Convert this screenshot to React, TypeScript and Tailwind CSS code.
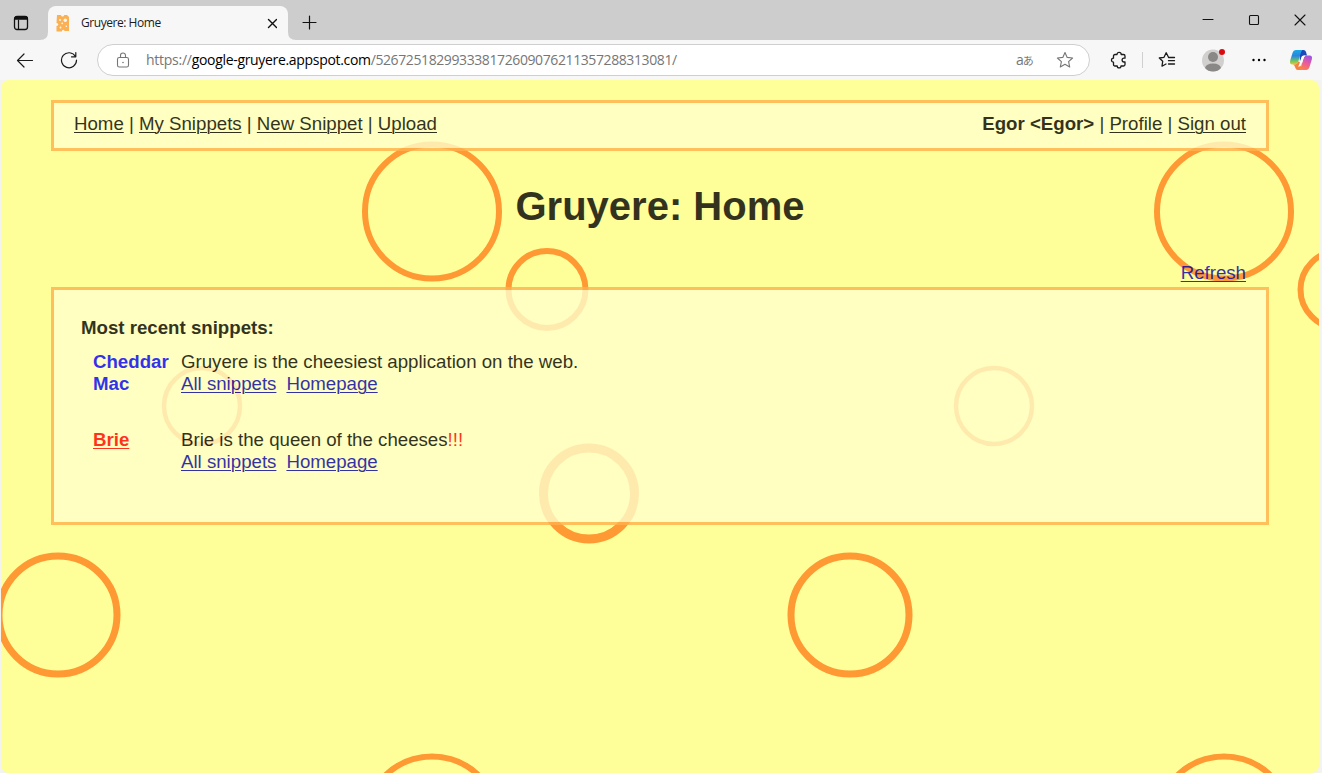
import type { ReactNode } from "react";

type Ring = { x: number; y: number; r: number; w: number };

const rings: Ring[] = [
  { x: 431, y: 131.5, r: 67, w: 6 },
  { x: 1223, y: 131.5, r: 67, w: 6 },
  { x: 546, y: 209.5, r: 38.5, w: 6 },
  { x: 1338, y: 209.5, r: 38.5, w: 6 },
  { x: 201, y: 326, r: 38, w: 4.5 },
  { x: 993, y: 326, r: 38, w: 4.5 },
  { x: 588, y: 413.5, r: 45.5, w: 9 },
  { x: 57, y: 535, r: 59, w: 7 },
  { x: 849, y: 535, r: 59, w: 7 },
  { x: 431, y: 743.5, r: 67, w: 6 },
  { x: 1223, y: 743.5, r: 67, w: 6 },
];

const windowControls = [
  "M3 7.500H13",
  "M4.500 3.500H11.500Q12.500 3.500 12.500 4.500V11.500Q12.500 12.500 11.500 12.500H4.500Q3.500 12.500 3.500 11.500V4.500Q3.500 3.500 4.500 3.500Z",
  "M3 3L13 13M13 3L3 13",
];

function Icon({ size, children, className = "" }: { size: number; children: ReactNode; className?: string }) {
  return (
    <svg
      width={size}
      height={size}
      viewBox={`0 0 ${size} ${size}`}
      fill="none"
      stroke="currentColor"
      strokeLinecap="round"
      strokeLinejoin="round"
      className={`block shrink-0 ${className}`}
    >
      {children}
    </svg>
  );
}

function Cheese() {
  return (
    <svg width="14" height="17" viewBox="0 0 14 17" className="block shrink-0">
      <path d="M1 0H5Q5.200 1.500 6.500 1.500Q8 1.500 8.200 0H11L13 2V16H8.500Q8.200 14.800 7.200 14.800Q6 14.800 5.800 16.500H.5V11Q2.300 10.800 2.300 9.500Q2.300 8.200 .5 8Z" fill="#fbb052" />
      <circle cx="4" cy="5" r="1" fill="#f7f7f7" />
      <circle cx="9.300" cy="5.200" r="1.700" fill="#f7f7f7" />
      <circle cx="6.200" cy="8.300" r=".9" fill="#f7f7f7" />
      <circle cx="10.300" cy="11.300" r=".8" fill="#f7f7f7" />
      <circle cx="4.500" cy="12.500" r=".9" fill="#f7f7f7" />
    </svg>
  );
}

function TabStrip() {
  return (
    <div className="flex h-10 bg-[#cdcdcd] text-[#111]">
      <div className="flex w-12 items-center pt-[5px] pl-[13px]">
        <Icon size={16}>
          <rect x="1.500" y="1.500" width="13" height="13" rx="2.500" strokeWidth="1.300" />
          <path d="M1.500 3.500Q1.500 1.500 3.500 1.500H12.500Q14.500 1.500 14.500 3.500V4.200H1.500Z" fill="currentColor" strokeWidth="1" />
          <path d="M5.500 5V14" strokeWidth="1.200" />
        </Icon>
      </div>
      <div className="relative mt-1.5 flex h-[34px] w-60 items-center rounded-t-lg bg-[#f7f7f7] pl-2">
        <svg width="8" height="8" className="absolute bottom-0 -left-2">
          <path d="M8 0V8H0Q8 8 8 0Z" fill="#f7f7f7" />
        </svg>
        <svg width="8" height="8" className="absolute -right-2 bottom-0">
          <path d="M0 0V8H8Q0 8 0 0Z" fill="#f7f7f7" />
        </svg>
        <Cheese />
        <span className="ml-[11px] w-[180px] text-[12px] tracking-[-0.45px] text-[#1b1b1b]">Gruyere: Home</span>
        <Icon size={16}>
          <path d="M7.500 4.500L15.500 12.500M15.500 4.500L7.500 12.500" strokeWidth="1.400" />
        </Icon>
      </div>
      <div className="flex flex-1 items-center pt-1.5 pl-[14px]">
        <Icon size={15} className="-mt-0.5">
          <path d="M7.500 1V14M1 7.500H14" strokeWidth="1.200" />
        </Icon>
      </div>
      <div className="-mr-px flex">
        {windowControls.map((d) => (
          <div key={d} className="flex w-[46px] justify-center pt-3">
            <Icon size={16}>
              <path d={d} strokeWidth="1.100" />
            </Icon>
          </div>
        ))}
      </div>
    </div>
  );
}

function Copilot() {
  return (
    <svg width="24" height="22" viewBox="0 0 24 22" className="block shrink-0">
      <defs>
        <linearGradient id="cpA" x1="0" y1="0" x2="0" y2="1">
          <stop offset="0" stopColor="#18a8e8" />
          <stop offset=".4" stopColor="#2b83e0" />
          <stop offset=".7" stopColor="#5cbf74" />
          <stop offset="1" stopColor="#e6cc24" />
        </linearGradient>
        <linearGradient id="cpB" x1=".7" y1="0" x2=".3" y2="1">
          <stop offset="0" stopColor="#a052e0" />
          <stop offset=".5" stopColor="#ea5c9c" />
          <stop offset="1" stopColor="#ff8148" />
        </linearGradient>
      </defs>
      <path d="M10 1H14.500Q16.400 1 17 3L18 6.500H15.500Q13.300 6.500 12.600 8.500L11 13Z" fill="#1c48b8" />
      <path d="M7 1H13.500Q12.300 2 11.800 4L9.300 12.500Q8.300 15.500 5.500 15.500H3.500Q.2 15.500 1.200 11.500L3.500 4Q4.400 1 7 1Z" fill="url(#cpA)" />
      <path d="M4 15.500H5.500Q8.300 15.500 9.300 12.500L13 14L11.500 21H9Q6.800 21 6.200 18.500Q5.700 16 4 15.500Z" fill="#f5813e" />
      <path d="M17 21H10Q11.400 20 12 18L14.500 9.500Q15.400 6.500 18 6.500H20.500Q23.800 6.500 22.800 10.500L20.500 18Q19.600 21 17 21Z" fill="url(#cpB)" />
      <path d="M12.700 7.500Q13.500 6.500 15.500 6.500H16.300Q15 7.500 14.500 9.500L12.200 16Q11.500 18 9 17.500Q10 16.500 10.500 14.500Z" fill="#fff" />
    </svg>
  );
}

function Toolbar() {
  return (
    <div className="flex h-10 items-center bg-[#f7f7f7] text-[#1b1b1b]">
      <Icon size={18} className="-mt-px ml-4">
        <path d="M16.500 9.500H1.500M8 3L1.500 9.500L8 16" strokeWidth="1.200" />
      </Icon>
      <Icon size={18} className="ml-[26px]">
        <path d="M15.500 5.500A7.500 7.500 0 1 0 16.500 9M15.800 1.500V5.800H11.500" strokeWidth="1.200" />
      </Icon>
      <div className="ml-[19px] flex h-8 w-[993px] items-center rounded-full border border-[#cfcfcf] bg-white pl-[17px] text-[#767676]">
        <Icon size={16}>
          <rect x="2.500" y="5.500" width="11" height="9.500" rx="1.800" strokeWidth="1.100" />
          <path d="M5.500 5.500V3.500A2.500 2.500 0 0 1 10.500 3.500V5.500" strokeWidth="1.100" />
          <circle cx="8" cy="10.500" r=".8" fill="currentColor" stroke="none" />
        </Icon>
        <div className="ml-[15px] flex w-[870px] text-[14px] leading-5">
          <span className="tracking-[-0.26px]">https://</span>
          <span className="tracking-[-0.32px] text-black">google-gruyere.appspot.com</span>
          <span className="tracking-[-0.4px]">/526725182993338172609076211357288313081/</span>
        </div>
        <span className="flex w-10 items-center text-[14px] leading-5">
          a<span className="-ml-px font-['Noto_Sans_CJK_JP',sans-serif] text-[11px]">あ</span>
        </span>
        <Icon size={18}>
          <path d="M9 1.500L11.200 6.400L16.600 7L12.600 10.600L13.700 16L9 13.300L4.300 16L5.400 10.600L1.400 7L6.800 6.400Z" strokeWidth="1.100" />
        </Icon>
      </div>
      <Icon size={18} className="ml-5">
        <path d="M5 3.500H7A2.100 2.100 0 0 1 11.200 3.500H13.500Q15 3.500 15 5V7.200H14A1.900 1.900 0 0 0 14 11H15V13.500Q15 15 13.500 15H11A1.900 1.900 0 0 1 7.200 15H5Q3.500 15 3.500 13.500V11.200A2 2 0 0 1 3.500 7.200V5Q3.500 3.500 5 3.500Z" strokeWidth="1.300" />
      </Icon>
      <div className="ml-[14px] h-4 w-px bg-[#d0d0d0]" />
      <Icon size={18} className="ml-[15px]">
        <path d="M10.500 6.200L8.200 1.700L6 6.300L1.300 7L4.700 10.300L4 15.200L8 13M10.500 6.500H16.500M10.500 9.700H16.500M10.500 13H16.500" strokeWidth="1.300" />
      </Icon>
      <svg width="24" height="26" viewBox="0 0 24 26" className="ml-[25px] block shrink-0">
        <circle cx="12" cy="13.500" r="11" fill="#d2d0ce" />
        <circle cx="12" cy="10" r="5" fill="#8a8886" />
        <path d="M4 21Q5 16.500 12 16.500Q19 16.500 20 21Q17 24.500 12 24.500Q7 24.500 4 21Z" fill="#8a8886" />
        <circle cx="21" cy="5" r="3" fill="#d90b12" />
      </svg>
      <svg width="16" height="4" viewBox="0 0 16 4" className="ml-[26px] block shrink-0">
        <circle cx="2.500" cy="2" r="1.200" />
        <circle cx="8" cy="2" r="1.200" />
        <circle cx="13.500" cy="2" r="1.200" />
      </svg>
      <div className="ml-[22px]">
        <Copilot />
      </div>
    </div>
  );
}

function Link({ children, className = "" }: { children: ReactNode; className?: string }) {
  return (
    <a href="#" className={`underline decoration-1 underline-offset-2 ${className}`}>
      {children}
    </a>
  );
}

function SnippetLinks() {
  return (
    <div className="flex gap-2.5 text-[#0000aa]">
      <Link>All snippets</Link>
      <Link>Homepage</Link>
    </div>
  );
}

function Page() {
  return (
    <main className="relative mr-[3px] ml-px h-[693px] overflow-hidden rounded-lg bg-[#ffff99] px-[50px] pt-5 font-['Liberation_Sans',Arial,sans-serif] text-[18.670px] leading-[22px] text-black">
      <svg width="1318" height="693" className="absolute top-0 left-0" fill="none" stroke="#ff9933">
        {rings.map((c) => (
          <circle key={`${c.x}-${c.y}`} cx={c.x} cy={c.y} r={c.r} strokeWidth={c.w} />
        ))}
      </svg>
      <nav className="relative flex h-[51px] justify-between border-3 border-[#ffb14e] bg-[#ffffcc] px-5 pt-[10px] opacity-80">
        <div className="whitespace-pre">
          <Link>Home</Link> | <Link>My Snippets</Link> | <Link>New Snippet</Link> | <Link>Upload</Link>
        </div>
        <div className="whitespace-pre">
          <b>Egor &lt;Egor&gt;</b> | <Link>Profile</Link> | <Link>Sign out</Link>
        </div>
      </nav>
      <h1 className="relative mt-8 text-center text-[40px] leading-[46px] font-bold opacity-80">Gruyere: Home</h1>
      <div className="relative mt-[33px] flex h-[25px] justify-end pr-[23px] opacity-80">
        <Link className="text-[#0000aa]">Refresh</Link>
      </div>
      <section className="relative h-[238px] border-3 border-[#ffb14e] bg-[#ffffcc] px-[27px] pt-[27px] opacity-80">
        <h2 className="font-bold">Most recent snippets:</h2>
        <div className="mt-3 grid grid-cols-[88px_1fr] gap-y-[34px] pl-3">
          <b className="text-[#0000ff]">
            Cheddar
            <br />
            Mac
          </b>
          <div>
            <p>Gruyere is the cheesiest application on the web.</p>
            <SnippetLinks />
          </div>
          <b className="text-[#ff0000]">
            <Link>Brie</Link>
          </b>
          <div>
            <p>
              Brie is the queen of the cheeses<span className="text-[#ff0000]">!!!</span>
            </p>
            <SnippetLinks />
          </div>
        </div>
      </section>
    </main>
  );
}

export default function App() {
  return (
    <div className="h-[773px] w-[1322px] overflow-hidden bg-[#f3f3f0] font-['Open_Sans','Noto_Sans',sans-serif]">
      <TabStrip />
      <Toolbar />
      <Page />
    </div>
  );
}
